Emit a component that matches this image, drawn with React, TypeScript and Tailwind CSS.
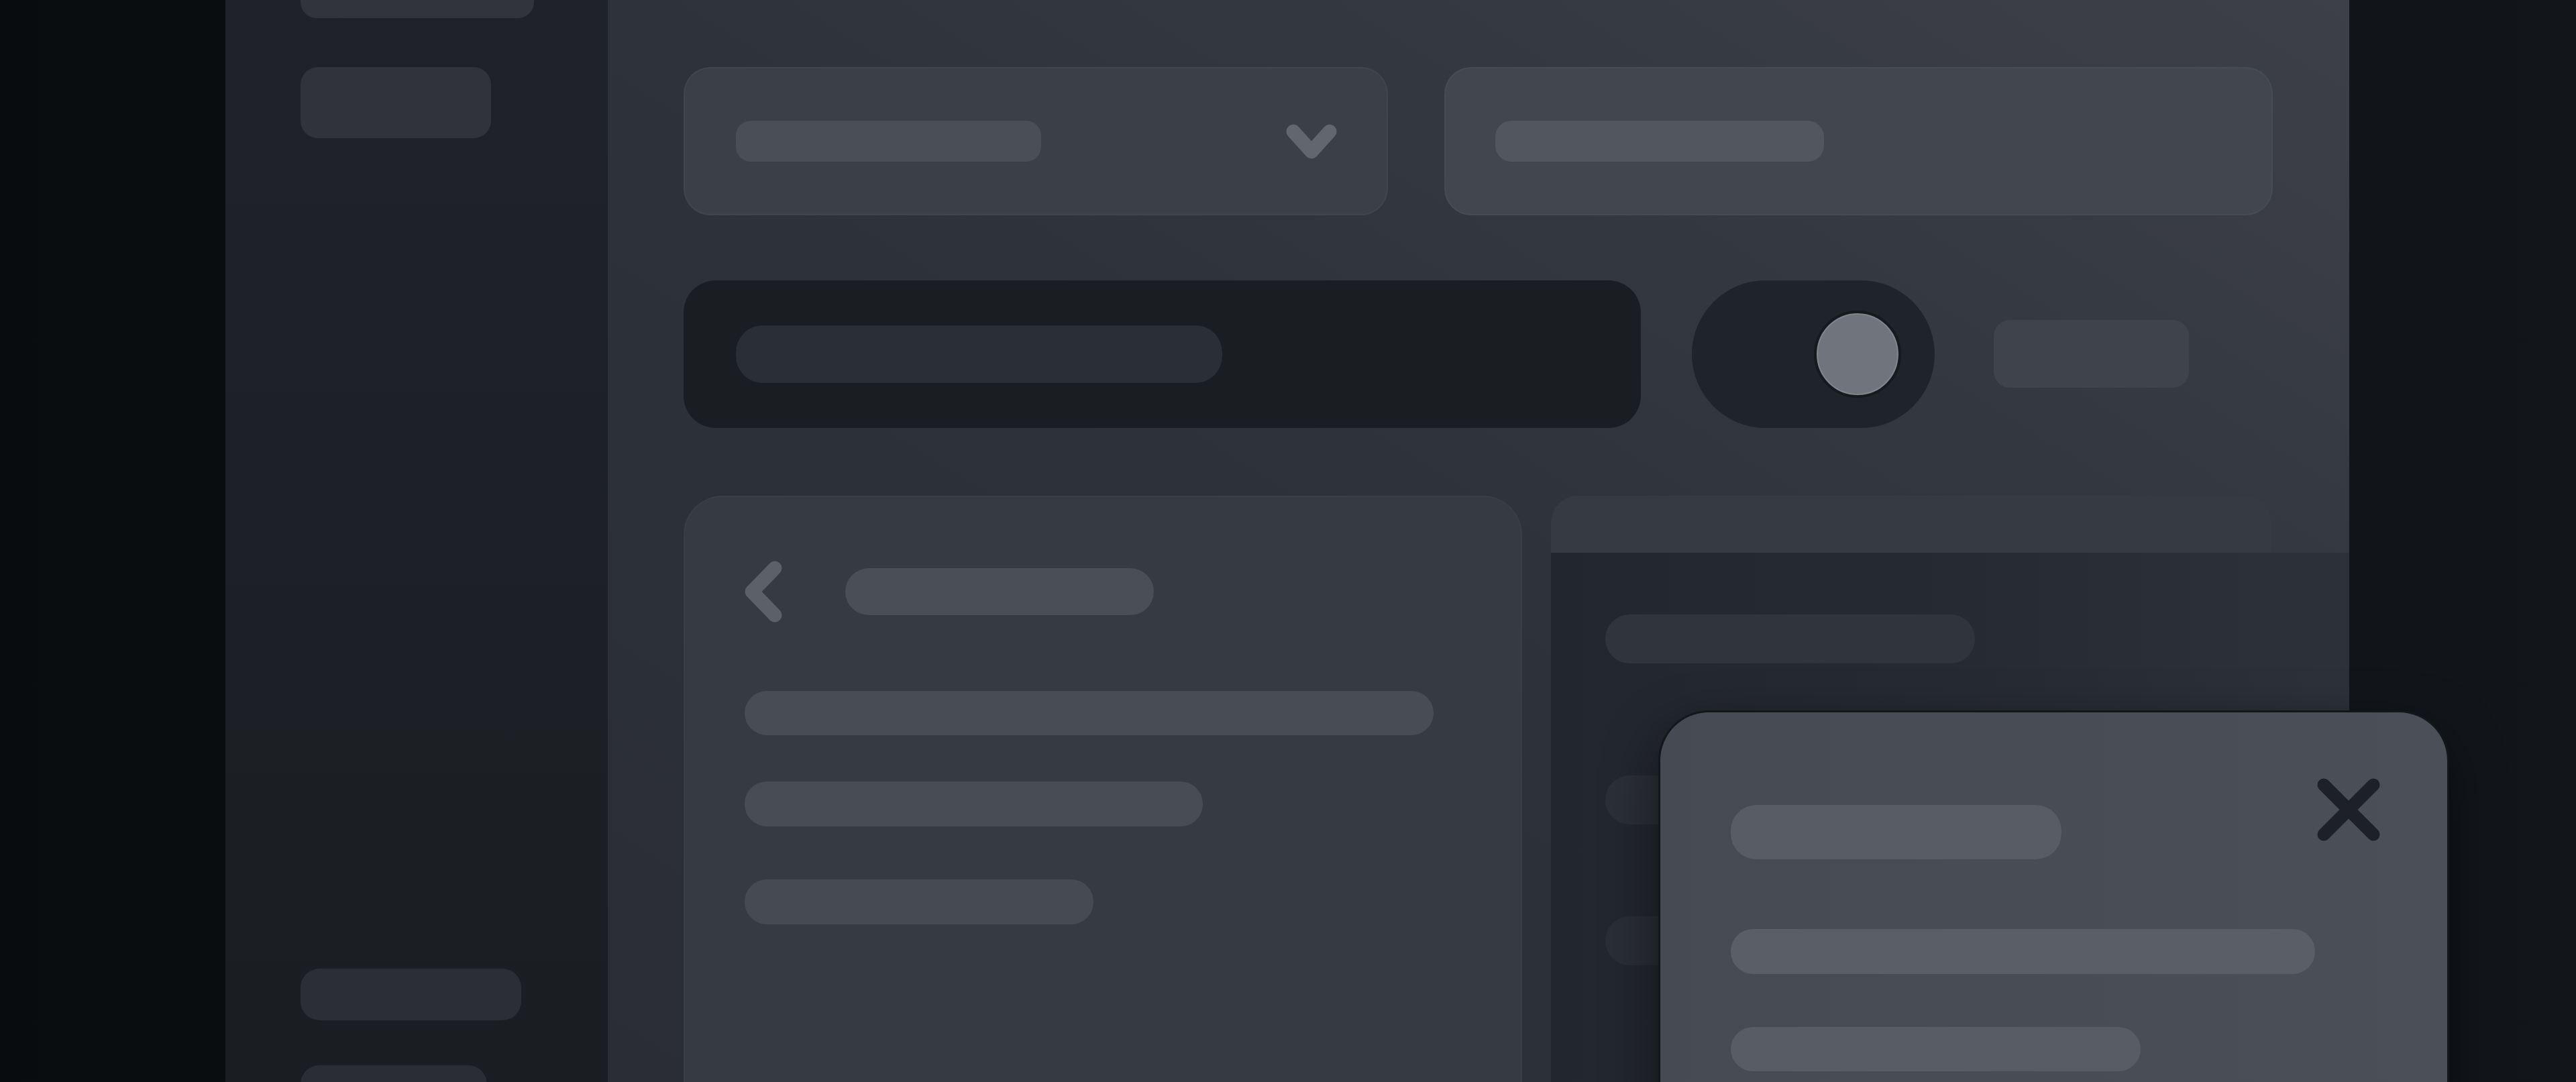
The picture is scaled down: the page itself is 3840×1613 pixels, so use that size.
import React from "react";

function ChevronDown() {
  return (
    <svg width="76" height="52" viewBox="0 0 76 52" fill="none" className="shrink-0">
      <polyline
        points="11,11 38,41 65,11"
        stroke="#62666f"
        strokeWidth="21"
        strokeLinecap="round"
        strokeLinejoin="round"
      />
    </svg>
  );
}

function ChevronLeft() {
  return (
    <svg width="56" height="92" viewBox="0 0 56 92" fill="none" className="shrink-0">
      <polyline
        points="45,11 11,46 45,81"
        stroke="#5c6069"
        strokeWidth="21"
        strokeLinecap="round"
        strokeLinejoin="round"
      />
    </svg>
  );
}

function CloseIcon() {
  return (
    <svg width="94" height="94" viewBox="0 0 94 94" fill="none" className="shrink-0">
      <path d="M10 10 L84 84 M84 10 L10 84" stroke="#1d2026" strokeWidth="19" strokeLinecap="round" />
    </svg>
  );
}

export default function App() {
  return (
    <div className="flex h-[1613px] w-full overflow-hidden bg-linear-to-r from-[#090c0f] to-[#12161b]">
      {/* left backdrop */}
      <div className="w-[336px] shrink-0" />

      {/* sidebar */}
      <aside className="flex w-[570px] shrink-0 flex-col justify-between bg-linear-to-b from-[#1f222a] to-[#1a1d21] pl-[112px]">
        <div className="flex flex-col gap-[73px]">
          <div className="-mt-[53px] h-[80px] w-[348px] rounded-[24px] bg-[#31343c]" />
          <div className="h-[106px] w-[284px] rounded-[26px] bg-[#30333b]" />
        </div>
        <div className="-mb-[52px] flex flex-col gap-[67px]">
          <div className="h-[77px] w-[329px] rounded-[28px] bg-[#2b2e35]" />
          <div className="h-[77px] w-[278px] rounded-[28px] bg-[#2a2d34]" />
        </div>
      </aside>

      {/* main */}
      <main className="relative flex w-[2596px] shrink-0 flex-col bg-linear-to-bl from-[#3d4047] via-[#2e3239] to-[#2a2d34] pl-[113px] pr-[114px] pt-[100px]">
        {/* row 1 */}
        <div className="flex h-[221px] shrink-0 gap-[84px]">
          <div className="flex w-[1050px] items-center justify-between rounded-[40px] border-2 border-white/[0.03] bg-[#3b3f47] pl-[76px] pr-[74px]">
            <div className="h-[61px] w-[455px] rounded-[22px] bg-[#4a4e57]" />
            <ChevronDown />
          </div>
          <div className="flex flex-1 items-center rounded-[40px] border-2 border-white/[0.03] bg-[#42464e] pl-[74px]">
            <div className="h-[61px] w-[490px] rounded-[24px] bg-[#52565f]" />
          </div>
        </div>

        {/* row 2 */}
        <div className="mt-[96px] flex h-[221px] shrink-0 items-center">
          <div className="flex h-[220px] w-[1427px] items-center rounded-[48px] bg-[#1a1d22] pl-[78px]">
            <div className="h-[86px] w-[725px] rounded-[40px] bg-[#2a2e35]" />
          </div>
          <div className="ml-[76px] flex h-[220px] w-[362px] items-center justify-end rounded-full bg-[#1f232a] pr-[50px]">
            <div className="h-[130px] w-[130px] rounded-full border-4 border-[#16191d] bg-[#6f747d] shadow-[inset_0_0_0_2px_#80858e]" />
          </div>
          <div className="ml-[88px] h-[101px] w-[291px] rounded-[24px] bg-[#3f434b]" />
        </div>

        {/* row 3 */}
        <div className="mt-[101px] flex min-h-0 flex-1 gap-[43px]">
          <section className="flex w-[1250px] flex-col rounded-t-[58px] border-2 border-b-0 border-[#3a3e46] bg-[#363a42] pl-[89px] pt-[95px]">
            <div className="flex items-center gap-[94px]">
              <ChevronLeft />
              <div className="h-[70px] w-[460px] rounded-[35px] bg-[#4a4e57]" />
            </div>
            <div className="mt-[102px] h-[66px] w-[1027px] rounded-[33px] bg-[#484c55]" />
            <div className="mt-[69px] h-[67px] w-[683px] rounded-[33px] bg-[#484c55]" />
            <div className="mt-[79px] h-[67px] w-[520px] rounded-[33px] bg-[#464a53]" />
          </section>

          <section className="-mr-[114px] flex flex-1 flex-col">
            <div className="h-[85px] w-[1074px] shrink-0 rounded-t-[40px] bg-[#363a42]" />
            <div className="flex flex-1 flex-col bg-linear-to-r from-[#22262d] via-[#262a31] to-[#2d3138] pl-[81px] pt-[92px]">
              <div className="h-[73px] w-[551px] rounded-[36px] bg-[#30343b]" />
              <div className="mt-[167px] h-[73px] w-[420px] rounded-[36px] bg-[#2b2f36]" />
              <div className="mt-[137px] h-[73px] w-[380px] rounded-[36px] bg-[#2a2e35]" />
            </div>
          </section>
        </div>

        {/* overlay dialog */}
        <div className="absolute left-[1569px] top-[1062px] flex h-[700px] w-[1173px] flex-col rounded-[72px] bg-linear-to-r from-[#464a52] to-[#4b4f57] pl-[105px] pr-[100px] pt-[98px] shadow-[0_0_0_3px_#13161a,0_30px_80px_rgba(0,0,0,0.55)]">
          <div className="flex items-start justify-between">
            <div className="mt-[40px] h-[81px] w-[493px] rounded-[38px] bg-[#585c65]" />
            <CloseIcon />
          </div>
          <div className="mt-[104px] h-[67px] w-[871px] rounded-[33px] bg-[#5a5e67]" />
          <div className="mt-[79px] h-[66px] w-[611px] rounded-[33px] bg-[#585c65]" />
        </div>
      </main>
    </div>
  );
}
